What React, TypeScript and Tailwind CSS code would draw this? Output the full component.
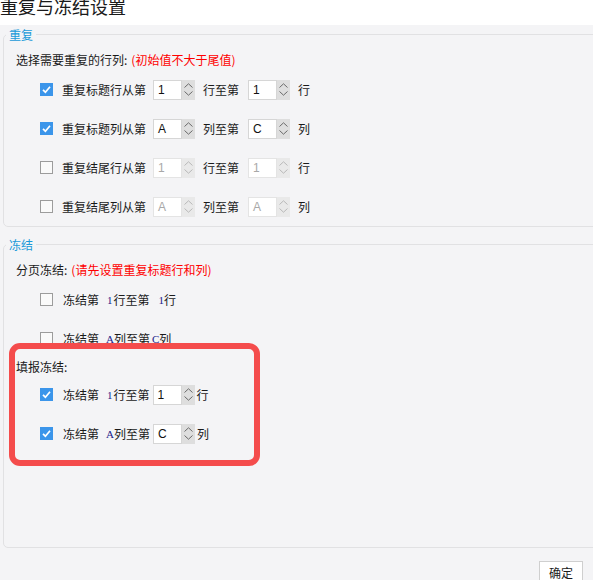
import React from "react";

const CJK = "font-['Noto_Sans_CJK_SC','Noto_Sans',sans-serif]";

function Check({ checked }: { checked: boolean }) {
  if (checked) {
    return (
      <div className="w-[13px] h-[13px] bg-[#3b95ea] flex items-center justify-center shrink-0">
        <svg width="13" height="13" viewBox="0 0 13 13">
          <path d="M3 6.8 L5.4 9.2 L10 3.8" fill="none" stroke="#ffffff" strokeWidth="1.7" />
        </svg>
      </div>
    );
  }
  return <div className="w-[13px] h-[13px] border border-[#9c9c9c] bg-[#fafafa] shrink-0" />;
}

function Spinner({ value, disabled }: { value: string; disabled?: boolean }) {
  const stroke = disabled ? "#b8b8b8" : "#6a6a6a";
  return (
    <div className="flex h-[20px] shrink-0">
      <div
        className={`w-[29px] h-[20px] bg-white border flex items-center pl-[4px] text-[12px] font-['Liberation_Sans',Arial,sans-serif] ${
          disabled ? "border-[#e4e4e4] text-[#a8a8a8]" : "border-[#d6d6d6] text-[#111]"
        }`}
      >
        {value}
      </div>
      <div
        className={`w-[13px] h-[20px] flex flex-col items-center justify-center gap-[3px] ${
          disabled ? "bg-[#e9e9e9]" : "bg-[#dedede]"
        }`}
      >
        <svg width="9" height="5" viewBox="0 0 9 5">
          <path d="M0.5 4.5 L4.5 0.8 L8.5 4.5" fill="none" stroke={stroke} strokeWidth="1" />
        </svg>
        <svg width="9" height="5" viewBox="0 0 9 5">
          <path d="M0.5 0.5 L4.5 4.2 L8.5 0.5" fill="none" stroke={stroke} strokeWidth="1" />
        </svg>
      </div>
    </div>
  );
}

function RepeatRow({
  checked,
  label,
  mid,
  end,
  v1,
  v2,
}: {
  checked: boolean;
  label: string;
  mid: string;
  end: string;
  v1: string;
  v2: string;
}) {
  return (
    <div className="h-[39px] flex items-center pl-[36px] text-[12px] text-[#1a1a1a]">
      <Check checked={checked} />
      <span className="ml-[9px] w-[84px]">{label}</span>
      <span className="ml-[7px]">
        <Spinner value={v1} disabled={!checked} />
      </span>
      <span className="ml-[8px] w-[36px]">{mid}</span>
      <span className="ml-[9px]">
        <Spinner value={v2} disabled={!checked} />
      </span>
      <span className="ml-[8px]">{end}</span>
    </div>
  );
}

function Small({ children }: { children: React.ReactNode }) {
  return (
    <span className="font-['Liberation_Serif',serif] text-[11px] text-[#1a1a8a]">{children}</span>
  );
}

export default function App() {
  return (
    <div className={`relative w-[593px] h-[580px] overflow-hidden bg-[#f4f4f6] ${CJK}`}>
      <div className="h-[25px] bg-white overflow-hidden">
        <div className="text-[18px] leading-[18px] text-[#1a1a1a] -mt-[3px]">重复与冻结设置</div>
      </div>

      <fieldset className="ml-[3px] mt-[1px] w-[640px] border border-[#e1e1e3] rounded-[5px]">
        <legend className="ml-[2px] px-[3px] text-[12px] leading-[17px] text-[#1a9ad9]">重复</legend>
        <div className="mt-[7px] h-[20px] flex items-center pl-[12px] text-[12px] text-[#1a1a1a]">
          <span>选择需要重复的行列:</span>
          <span className="ml-[4px] text-[#ff0000]">(初始值不大于尾值)</span>
        </div>
        <RepeatRow checked label="重复标题行从第" mid="行至第" end="行" v1="1" v2="1" />
        <RepeatRow checked label="重复标题列从第" mid="列至第" end="列" v1="A" v2="C" />
        <RepeatRow checked={false} label="重复结尾行从第" mid="行至第" end="行" v1="1" v2="1" />
        <RepeatRow checked={false} label="重复结尾列从第" mid="列至第" end="列" v1="A" v2="A" />
      </fieldset>

      <fieldset className="ml-[3px] mt-[9px] w-[640px] border border-[#e1e1e3] rounded-[5px]">
        <legend className="ml-[2px] px-[3px] text-[12px] leading-[17px] text-[#1a9ad9]">冻结</legend>
        <div className="mt-[7px] h-[20px] flex items-center pl-[12px] text-[12px] text-[#1a1a1a]">
          <span>分页冻结:</span>
          <span className="ml-[4px] text-[#ff0000]">(请先设置重复标题行和列)</span>
        </div>
        <div className="h-[39px] flex items-center pl-[36px] text-[12px] text-[#1a1a1a]">
          <Check checked={false} />
          <span className="ml-[10px]">冻结第</span>
          <span className="ml-[8px]">
            <Small>1</Small>
          </span>
          <span className="ml-[1px]">行至第</span>
          <span className="ml-[9px]">
            <Small>1</Small>
          </span>
          <span>行</span>
        </div>
        <div className="h-[39px] flex items-center pl-[36px] text-[12px] text-[#1a1a1a]">
          <Check checked={false} />
          <span className="ml-[10px]">冻结第</span>
          <span className="ml-[7px]">
            <Small>A</Small>
          </span>
          <span>列至第</span>
          <span className="ml-[2px]">
            <Small>C</Small>
          </span>
          <span>列</span>
        </div>
        <div className="h-[17px] flex items-center pl-[12px] text-[12px] text-[#1a1a1a]">
          <span>填报冻结:</span>
        </div>
        <div className="h-[39px] flex items-center pl-[36px] text-[12px] text-[#1a1a1a]">
          <Check checked />
          <span className="ml-[10px]">冻结第</span>
          <span className="ml-[8px]">
            <Small>1</Small>
          </span>
          <span className="ml-[1px]">行至第</span>
          <span className="ml-[3px]">
            <Spinner value="1" />
          </span>
          <span className="ml-[2px]">行</span>
        </div>
        <div className="h-[39px] flex items-center pl-[36px] text-[12px] text-[#1a1a1a]">
          <Check checked />
          <span className="ml-[10px]">冻结第</span>
          <span className="ml-[7px]">
            <Small>A</Small>
          </span>
          <span>列至第</span>
          <span className="ml-[3px]">
            <Spinner value="C" />
          </span>
          <span className="ml-[2px]">列</span>
        </div>
        <div className="h-[94px]" />
      </fieldset>

      <div className="flex mt-[13px]">
        <button className="ml-auto mr-[10px] w-[44px] h-[24px] bg-white border border-[#cfcfcf] text-[12px] text-[#1a1a1a] leading-[20px]">
          确定
        </button>
      </div>

      <div className="absolute left-[9px] top-[343px] w-[251px] h-[123px] border-[6px] border-[#f44c4c] rounded-[11px] pointer-events-none" />
    </div>
  );
}
